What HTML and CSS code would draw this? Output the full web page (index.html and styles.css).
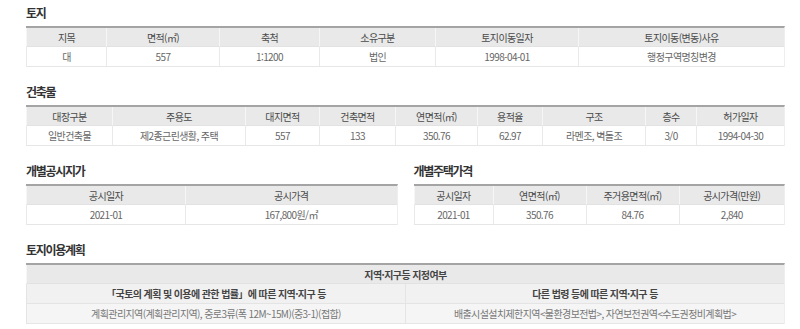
FILE: index.html
```html
<!DOCTYPE html>
<html lang="ko">
<head>
<meta charset="utf-8">
<link rel="stylesheet" href="styles.css">
</head>
<body>
<div class="page">
  <section class="sec">
    <h2 class="sec-title">토지</h2>
    <div class="tbl tbl-land">
      <div class="th">지목</div>
      <div class="th">면적(㎡)</div>
      <div class="th">축척</div>
      <div class="th">소유구분</div>
      <div class="th">토지이동일자</div>
      <div class="th">토지이동(변동)사유</div>
      <div class="td">대</div>
      <div class="td">557</div>
      <div class="td">1:1200</div>
      <div class="td">법인</div>
      <div class="td">1998-04-01</div>
      <div class="td">행정구역명칭변경</div>
    </div>
  </section>

  <section class="sec">
    <h2 class="sec-title">건축물</h2>
    <div class="tbl tbl-bldg">
      <div class="th">대장구분</div>
      <div class="th">주용도</div>
      <div class="th">대지면적</div>
      <div class="th">건축면적</div>
      <div class="th">연면적(㎡)</div>
      <div class="th">용적율</div>
      <div class="th">구조</div>
      <div class="th">층수</div>
      <div class="th">허가일자</div>
      <div class="td">일반건축물</div>
      <div class="td">제2종근린생활, 주택</div>
      <div class="td">557</div>
      <div class="td">133</div>
      <div class="td">350.76</div>
      <div class="td">62.97</div>
      <div class="td">라멘조, 벽돌조</div>
      <div class="td">3/0</div>
      <div class="td">1994-04-30</div>
    </div>
  </section>

  <div class="pair">
    <section class="sec half">
      <h2 class="sec-title">개별공시지가</h2>
      <div class="tbl tbl-landprice">
        <div class="th">공시일자</div>
        <div class="th">공시가격</div>
        <div class="td">2021-01</div>
        <div class="td">167,800원/㎡</div>
      </div>
    </section>
    <section class="sec half">
      <h2 class="sec-title">개별주택가격</h2>
      <div class="tbl tbl-house">
        <div class="th">공시일자</div>
        <div class="th">연면적(㎡)</div>
        <div class="th">주거용면적(㎡)</div>
        <div class="th">공시가격(만원)</div>
        <div class="td">2021-01</div>
        <div class="td">350.76</div>
        <div class="td">84.76</div>
        <div class="td">2,840</div>
      </div>
    </section>
  </div>

  <section class="sec">
    <h2 class="sec-title">토지이용계획</h2>
    <div class="tbl tbl-plan">
      <div class="th span-all strong">지역·지구등 지정여부</div>
      <div class="sub strong">「국토의 계획 및 이용에 관한 법률」에 따른 지역·지구 등</div>
      <div class="sub strong">다른 법령 등에 따른 지역·지구 등</div>
      <div class="td soft">계획관리지역(계획관리지역), 중로3류(폭 12M~15M)(중3-1)(접합)</div>
      <div class="td soft">배출시설설치제한지역&lt;물환경보전법&gt;, 자연보전권역&lt;수도권정비계획법&gt;</div>
    </div>
  </section>
</div>
</body>
</html>
```

FILE: styles.css
```css
* { box-sizing: border-box; margin: 0; padding: 0; }

body {
  background: #fff;
  font-family: "Noto Sans CJK KR", "Noto Sans", sans-serif;
  color: #555;
}

.page {
  width: 759px;
  margin-left: 26px;
  display: flex;
  flex-direction: column;
  gap: 12px;
}

.sec-title {
  height: 26px;
  line-height: 26px;
  font-size: 12px;
  font-weight: 700;
  letter-spacing: -1.3px;
  color: #333;
}

.tbl {
  display: grid;
  border-top: 2px solid #a4a4a4;
  border-right: 1px solid #eeeeee;
  font-size: 10px;
  letter-spacing: -0.6px;
}

.th, .td, .sub {
  display: flex;
  align-items: center;
  justify-content: center;
  white-space: nowrap;
  overflow: hidden;
}

.th {
  height: 19px;
  background: #e9e9e9;
  color: #4a4a4a;
  border-left: 1px solid #f6f6f6;
  border-bottom: 1px solid #e2e2e2;
}

.td {
  height: 20px;
  background: #fff;
  color: #666;
  border-left: 1px solid #e9e9e9;
  border-bottom: 1px solid #e6e6e6;
}

.tbl-land { grid-template-columns: 80px 113px 100px 116px 143px 1fr; }
.tbl-bldg { grid-template-columns: 86px 133px 74px 76px 82px 65px 103px 51px 1fr; }

.pair {
  display: flex;
  gap: 16px;
}
.half { flex: 1; }

.tbl-landprice { grid-template-columns: 159px 1fr; }
.tbl-house { grid-template-columns: 79px 93px 93px 1fr; }

.tbl-plan { grid-template-columns: 379px 1fr; }

.span-all { grid-column: 1 / -1; height: 19px; }

.sub {
  height: 20px;
  background: #f1f1f1;
  color: #444;
  border-left: 1px solid #e4e4e4;
  border-bottom: 1px solid #e4e4e4;
}

.strong { font-weight: 700; color: #444; }

.soft {
  background: #f5f5f5;
  color: #777;
  border-left-color: #e4e4e4;
}
```
